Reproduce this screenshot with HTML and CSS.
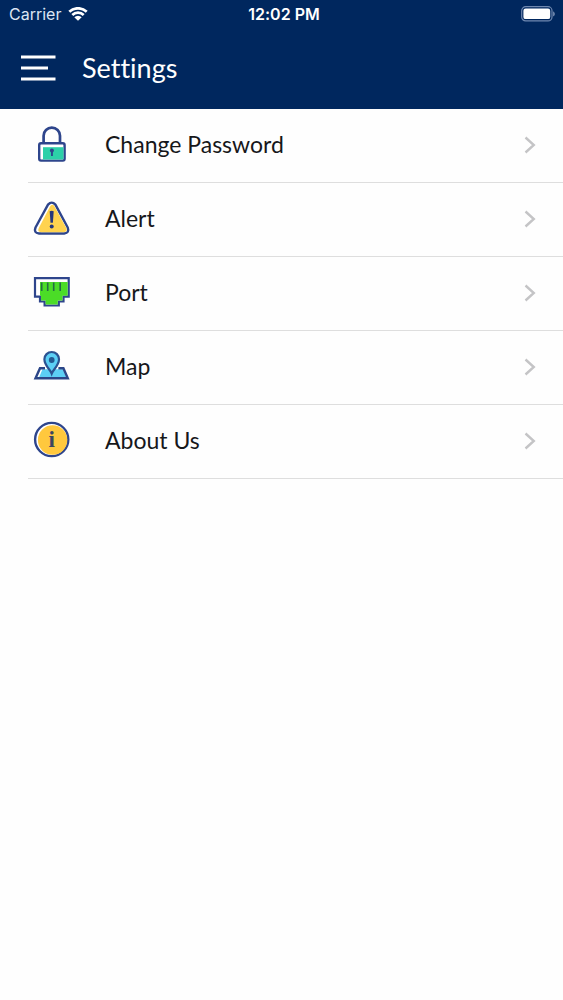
FILE: index.html
```
<!DOCTYPE html>
<html lang="en">
<head>
<meta charset="utf-8">
<meta name="viewport" content="width=device-width, initial-scale=1">
<title>Settings</title>
<link rel="stylesheet" href="styles.css">
</head>
<body>
<header class="header">
  <div class="status">
    <div class="status-left">
      <span>Carrier</span>
      <svg class="wifi" viewBox="0 0 20 14" aria-hidden="true">
        <path d="M1.300 4.800a12.500 12.500 0 0 1 17.400 0M4.300 8a8.200 8.200 0 0 1 11.400 0" fill="none" stroke="#fff" stroke-width="2.700"/>
        <path d="M10 13.800 6.300 10.300a5.300 5.300 0 0 1 7.400 0z" fill="#fff"/>
      </svg>
    </div>
    <span class="clock">12:02 PM</span>
    <div class="status-right">
      <svg class="battery" viewBox="0 0 35 16" aria-hidden="true">
        <rect x="1.700" y="0.700" width="30.300" height="14.200" rx="4" fill="none" stroke="#6f88b0" stroke-width="1.200"/>
        <rect x="3.400" y="2.500" width="26.800" height="10.600" rx="2.200" fill="#fff"/>
        <path d="M33.200 5.300q1.600 1 1.600 2.600t-1.600 2.600z" fill="#8196b8"/>
      </svg>
    </div>
  </div>
  <div class="navbar">
    <button class="menu" type="button" aria-label="Menu">
      <svg viewBox="0 0 36 26" aria-hidden="true"><path d="M1 2h34.500M1 13h27M1 24h34.500" stroke="#fff" stroke-width="3"/></svg>
    </button>
    <h1 class="title">Settings</h1>
  </div>
</header>
<main>
  <nav class="list" aria-label="Settings">
    <a class="row" href="#password">
      <svg class="icon" viewBox="0 -1 40 41" aria-hidden="true">
        <path d="M11.600 18v-7.200a8.200 8.200 0 0 1 16.400 0V18" fill="none" stroke="#2e458c" stroke-width="2.700"/>
        <rect x="7.200" y="18.300" width="25.400" height="17.300" rx="1.800" fill="#fff" stroke="#2e458c" stroke-width="2.400"/>
        <path d="M11 22.200h20.500v12.300H11z" fill="#2cd0a8"/>
        <circle cx="19.900" cy="25.500" r="2" fill="#2e458c"/><path d="M19 26h1.900v5H19z" fill="#2e458c"/>
      </svg>
      <span class="label">Change Password</span>
      <svg class="chevron" viewBox="0 0 12 18" aria-hidden="true"><path d="m1.500 1.500 8.300 7.500-8.300 7.500"/></svg>
    </a>
    <a class="row" href="#alert">
      <svg class="icon" viewBox="0 -1 40 41" aria-hidden="true">
        <path d="M16 5.600q3.700-4 7.400 0L35.700 28.500q2 5.500-3.500 6H7q-5.600-.5-3.500-6z" fill="#fff" stroke="#2e458c" stroke-width="2.400" stroke-linejoin="round"/>
        <path d="M18.300 7q2.300-2.500 4 0l12 22q1.500 3.800-2.300 4.300H9q-4-.5-2.200-4.300z" fill="#ffd34f"/>
        <path d="M17.700 12.200q2-1 4 0l-.8 11.500h-2.400z" fill="#25377c"/><circle cx="19.700" cy="27.400" r="2" fill="#25377c"/>
      </svg>
      <span class="label">Alert</span>
      <svg class="chevron" viewBox="0 0 12 18" aria-hidden="true"><path d="m1.500 1.500 8.300 7.500-8.300 7.500"/></svg>
    </a>
    <a class="row" href="#port">
      <svg class="icon" viewBox="0 -1 40 41" aria-hidden="true">
        <path d="M3 5.200h33.700v18.500h-5.200v4.800h-4.700v4H12.600v-4H8v-4.800H3z" fill="#fff" stroke="#2e458c" stroke-width="2.200"/>
        <path d="M8 9h27.700v13.700h-5.200v4.800h-4.700v4H13.600v-4H9v-4.800H8z" fill="#4bdc27"/>
        <path d="M9.700 9.500v8.500M15.700 9.500v8.500M21.700 9.500v8.500M28.200 9.500v8.500" stroke="#236b45" stroke-width="1.600"/>
      </svg>
      <span class="label">Port</span>
      <svg class="chevron" viewBox="0 0 12 18" aria-hidden="true"><path d="m1.500 1.500 8.300 7.500-8.300 7.500"/></svg>
    </a>
    <a class="row" href="#map">
      <svg class="icon" viewBox="0 -1 40 41" aria-hidden="true">
        <path d="M8 21.200h23.500L36 31.400H3.300z" fill="#fff"/>
        <path d="M10.500 22.200h20.400l3.500 8.200H7z" fill="#5ccff5"/>
        <path d="M13 21.200H8L3.500 31.300h32.300l-4.400-10.100h-5" fill="none" stroke="#2b4688" stroke-width="2.400"/>
        <path d="M19.700 26.500c-1.500-4-7.300-8-7.300-14.200a7.300 7.300 0 0 1 14.600 0c0 6.200-5.800 10.200-7.300 14.200z" fill="#5ccff5" stroke="#2b5291" stroke-width="2.200"/>
        <circle cx="19.700" cy="13" r="2.900" fill="#235a92"/>
      </svg>
      <span class="label">Map</span>
      <svg class="chevron" viewBox="0 0 12 18" aria-hidden="true"><path d="m1.500 1.500 8.300 7.500-8.300 7.500"/></svg>
    </a>
    <a class="row" href="#about">
      <svg class="icon" viewBox="0 -1 40 41" aria-hidden="true">
        <circle cx="19.700" cy="18.500" r="16.600" fill="#fff" stroke="#2e458c" stroke-width="2.400"/>
        <circle cx="20.600" cy="19" r="14.700" fill="#ffc83d"/>
        <text class="info-letter" x="19.700" y="26" text-anchor="middle">i</text>
      </svg>
      <span class="label">About Us</span>
      <svg class="chevron" viewBox="0 0 12 18" aria-hidden="true"><path d="m1.500 1.500 8.300 7.500-8.300 7.500"/></svg>
    </a>
  </nav>
</main>
</body>
</html>
```
FILE: styles.css
```
* { box-sizing: border-box; }

body {
  margin: 0;
  background: #fefefe;
  color: #16171a;
  font-family: Lato, sans-serif;
  font-variant-ligatures: none;
}

.header {
  background: #00275e;
  color: #fff;
}

.status {
  display: grid;
  grid-template-columns: 1fr auto 1fr;
  align-items: center;
  height: 28px;
  padding: 0 8px 0 9px;
  font-family: Inter, sans-serif;
  font-size: 16px;
}

.status-left {
  display: flex;
  align-items: center;
  gap: 7px;
  color: #dbe5f3;
}

.wifi { width: 20px; height: 14px; }

.clock {
  padding-left: 4px;
  font-weight: 600;
}

.status-right {
  display: flex;
  justify-content: flex-end;
}

.battery { width: 35px; height: 16px; }

.navbar {
  display: flex;
  align-items: center;
  gap: 26px;
  height: 81px;
  padding: 0 20px 2px;
}

.menu {
  display: flex;
  padding: 0;
  border: 0;
  background: none;
  cursor: pointer;
}

.menu svg { width: 36px; height: 26px; }

.title {
  margin: 0;
  font-size: 27px;
  font-weight: 400;
  line-height: 32px;
}

.list { padding-left: 28px; }

.row {
  display: flex;
  align-items: center;
  padding: 15px 27px 17px 4px;
  border-bottom: 1px solid #dedede;
  color: inherit;
  text-decoration: none;
}

.icon { width: 40px; height: 41px; }

.label {
  flex: 1;
  margin-left: 33px;
  padding-bottom: 2px;
  font-size: 23px;
  line-height: 28px;
}

.chevron {
  width: 12px;
  height: 18px;
  fill: none;
  stroke: #c4c4c6;
  stroke-width: 2.4;
}

.info-letter {
  font: bold 23px "Liberation Serif", serif;
  fill: #3c4560;
}
```
